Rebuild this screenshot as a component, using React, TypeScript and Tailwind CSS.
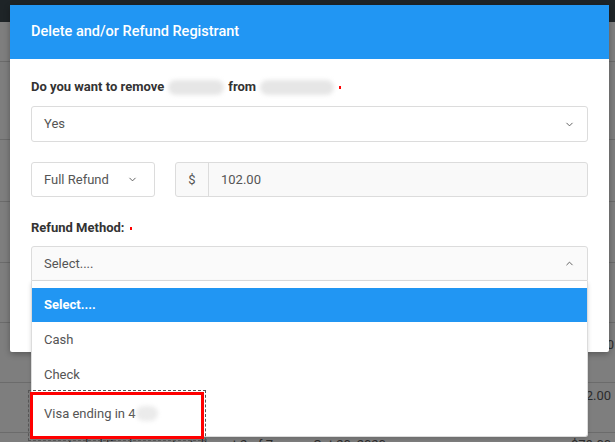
import { ChevronDown, ChevronUp } from "lucide-react";

const bgRows = [
  { h: "h-[40px]", pt: "pt-0", pr: "pr-[4px]", right: "" },
  { h: "h-[78px]", pt: "pt-0", pr: "pr-[4px]", right: "" },
  { h: "h-[62px]", pt: "pt-0", pr: "pr-[4px]", right: "" },
  { h: "h-[61px]", pt: "pt-0", pr: "pr-[4px]", right: "" },
  { h: "h-[60px]", pt: "pt-0", pr: "pr-[4px]", right: "" },
  { h: "h-[60px]", pt: "pt-[14px]", pr: "pr-[1px]", right: "$50.00" },
  { h: "h-[50px]", pt: "pt-[5px]", pr: "pr-[4px]", right: "$102.00" },
  { h: "h-[40px]", pt: "pt-[4px]", pr: "pr-[4px]", right: "$79.00" },
];

function Blur({ className }: { className: string }) {
  return (
    <span
      aria-hidden="true"
      className={`inline-block h-[15px] rounded-full bg-[#e6e6e6] blur-[2px] align-middle ${className}`}
    />
  );
}

function Required() {
  return <span className="ml-[5px] inline-block h-[3px] w-[2px] bg-[#ff0000] align-middle" />;
}

export default function App() {
  return (
    <div className="relative h-[442px] w-[615px] overflow-hidden bg-[#7e7e7e] font-['Roboto',sans-serif]">
      {/* page behind the backdrop */}
      <div className="h-[22px] bg-[#1e2427]" />
      {bgRows.map((row, i) => (
        <div
          key={i}
          className={`flex items-start justify-end border-b border-[#6b6b6b] ${row.h} ${row.pt} ${row.pr}`}
        >
          <span className="text-[13px] leading-[16px] text-[#2c2c2c]">{row.right}</span>
        </div>
      ))}
      <div className="absolute left-[68px] top-[437px] flex gap-[40px] text-[13px] leading-[16px] text-[#2c2c2c]">
        <span>Isabel Ford</span>
        <span>Installment 2 of 7</span>
        <span>Oct 20, 2020</span>
      </div>

      {/* modal */}
      <div className="absolute left-[10px] top-[5px] w-[599px] rounded-[2px] bg-white shadow-[0_2px_6px_rgba(0,0,0,0.3)]">
        <div className="flex h-[54px] items-center bg-[#2196f3] px-[21px]">
          <h1 className="text-[14.5px] font-medium text-white">Delete and/or Refund Registrant</h1>
        </div>

        <div className="px-[21px] pb-[20px] pt-[20px]">
          <p className="flex h-[16px] items-center text-[13px] font-bold text-[#333]">
            Do you want to remove
            <Blur className="ml-[4px] mr-[4px] w-[56px]" />
            from
            <Blur className="ml-[4px] w-[74px]" />
            <Required />
          </p>

          <div className="mt-[11px] flex h-[36px] items-center justify-between rounded-[3px] border border-[#dcdcdc] bg-white pl-[12px] pr-[12px] text-[13px] text-[#555]">
            <span>Yes</span>
            <ChevronDown className="size-[11px] stroke-[2]" />
          </div>

          <div className="mt-[20px] flex gap-[20px]">
            <div className="flex h-[35px] w-[124px] items-center justify-between rounded-[3px] border border-[#dcdcdc] bg-white pl-[12px] pr-[16px] text-[13px] text-[#555]">
              <span>Full Refund</span>
              <ChevronDown className="size-[11px] stroke-[2]" />
            </div>
            <div className="flex h-[35px] flex-1 rounded-[3px] border border-[#dcdcdc] bg-[#f9f9f9] text-[13px] text-[#555]">
              <span className="flex w-[33px] items-center justify-center border-r border-[#dcdcdc]">$</span>
              <span className="flex items-center pl-[12px]">102.00</span>
            </div>
          </div>

          <p className="mt-[23px] flex h-[16px] items-center text-[13px] font-bold text-[#333]">
            Refund Method:
            <Required />
          </p>

          <div className="relative mt-[10px]">
            <div className="flex h-[35px] items-center justify-between rounded-t-[3px] border border-[#dcdcdc] bg-[#fafafa] pl-[12px] pr-[12px] text-[13px] text-[#555]">
              <span>Select....</span>
              <ChevronUp className="size-[11px] stroke-[2]" />
            </div>

            <ul className="absolute left-0 right-0 top-[35px] z-10 rounded-b-[3px] border border-t-0 border-[#dcdcdc] bg-white pb-[1px] pt-[7px] text-[13px] text-[#555] shadow-[0_2px_4px_rgba(0,0,0,0.15)]">
              <li className="flex h-[34px] items-center bg-[#2196f3] pl-[12px] font-bold text-white">
                Select....
              </li>
              <li className="flex h-[35px] items-center pl-[12px]">Cash</li>
              <li className="flex h-[35px] items-center pl-[12px]">Check</li>
              <li className="relative flex h-[43px] items-center pl-[12px]">
                <span>Visa ending in 4</span>
                <span className="inline-block h-[15px] w-[22px] rounded-full bg-[#ebebeb] blur-[2px]" />
                <span className="pointer-events-none absolute -left-[4px] top-[-2px] h-[51px] w-[178px] border border-dashed border-[#555]" />
                <span className="pointer-events-none absolute -left-[2px] top-0 h-[47px] w-[174px] border-[3px] border-[#ff0000]" />
              </li>
            </ul>
          </div>

          <div className="h-[51px]" />
        </div>
      </div>
    </div>
  );
}
